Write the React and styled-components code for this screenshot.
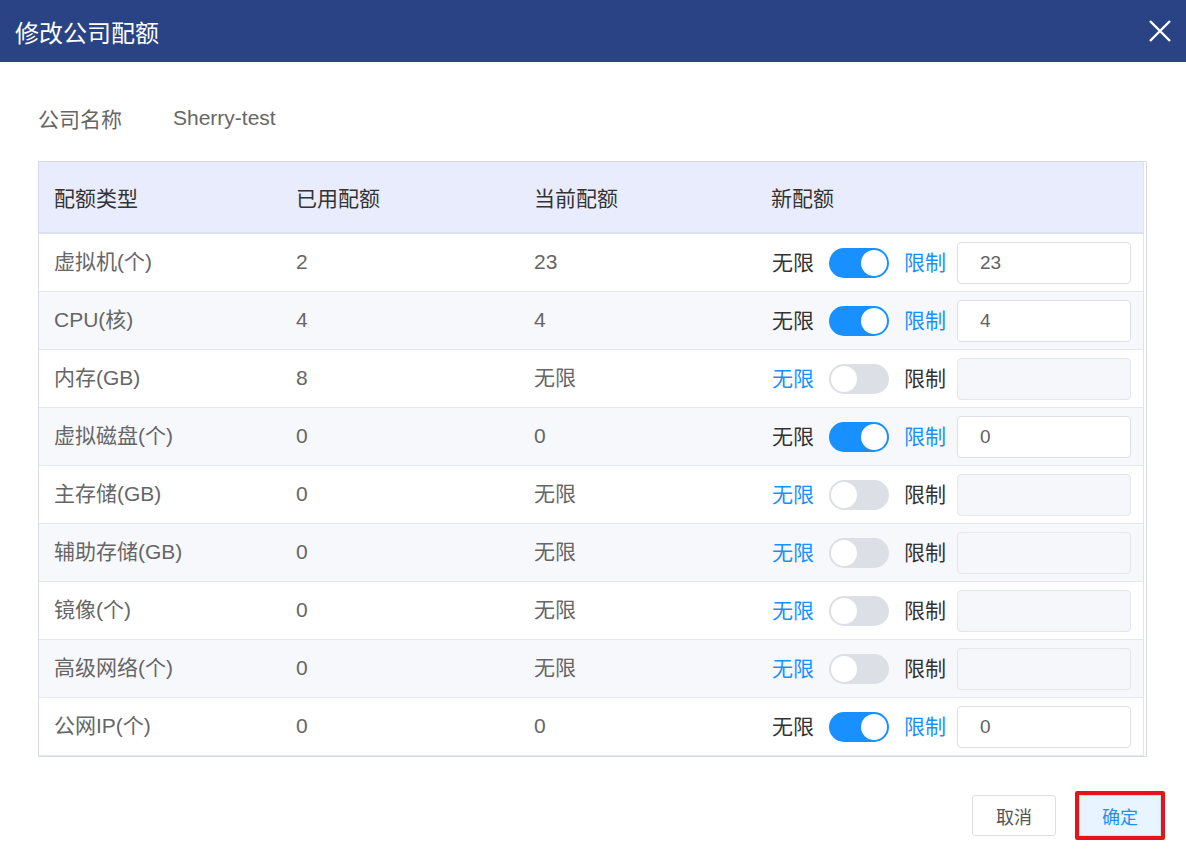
import styled, { createGlobalStyle } from 'styled-components';

const GlobalStyle = createGlobalStyle`
    body {
        margin: 0;
        background: #fff;
        font-family: "Liberation Sans", "Noto Sans CJK SC", sans-serif;
    }
`;

const rows = [
    { name: '虚拟机(个)', used: '2', current: '23', limited: true, value: '23' },
    { name: 'CPU(核)', used: '4', current: '4', limited: true, value: '4' },
    { name: '内存(GB)', used: '8', current: '无限', limited: false, value: '' },
    { name: '虚拟磁盘(个)', used: '0', current: '0', limited: true, value: '0' },
    { name: '主存储(GB)', used: '0', current: '无限', limited: false, value: '' },
    { name: '辅助存储(GB)', used: '0', current: '无限', limited: false, value: '' },
    { name: '镜像(个)', used: '0', current: '无限', limited: false, value: '' },
    { name: '高级网络(个)', used: '0', current: '无限', limited: false, value: '' },
    { name: '公网IP(个)', used: '0', current: '0', limited: true, value: '0' },
];

const App = () => {
    return (
        <Dialog>
            <GlobalStyle />
            <Header>
                <Title>修改公司配额</Title>
                <Close aria-label="close">
                    <svg width="24" height="24" viewBox="0 0 24 24">
                        <path d="M2 2 L22 22 M22 2 L2 22" stroke="#fff" strokeWidth="2.4" />
                    </svg>
                </Close>
            </Header>
            <Body>
                <CompanyRow>
                    <CompanyLabel>公司名称</CompanyLabel>
                    <CompanyName>Sherry-test</CompanyName>
                </CompanyRow>
                <TableWrap>
                    <Table>
                        <HeadRow>
                            <HeadCell>配额类型</HeadCell>
                            <HeadCell>已用配额</HeadCell>
                            <HeadCell>当前配额</HeadCell>
                            <HeadCell>新配额</HeadCell>
                        </HeadRow>
                        {rows.map((row, i) => (
                            <Row key={row.name} $stripe={i % 2 === 1}>
                                <Cell>{row.name}</Cell>
                                <Cell>{row.used}</Cell>
                                <Cell>{row.current}</Cell>
                                <QuotaCell>
                                    <Option $active={!row.limited}>无限</Option>
                                    <Switch $on={row.limited}><Knob /></Switch>
                                    <Option $active={row.limited}>限制</Option>
                                    <Input
                                        type="text"
                                        defaultValue={row.value}
                                        disabled={!row.limited}
                                    />
                                </QuotaCell>
                            </Row>
                        ))}
                    </Table>
                </TableWrap>
                <Footer>
                    <CancelButton>取消</CancelButton>
                    <Highlight>
                        <ConfirmButton>确定</ConfirmButton>
                    </Highlight>
                </Footer>
            </Body>
        </Dialog>
    );
};

export default App;

const Dialog = styled.div`
    width: 1186px;
    height: 860px;
    background: #fff;
    overflow: hidden;
`;

const Header = styled.div`
    height: 62px;
    background-color: #2a4385;
    display: flex;
    align-items: center;
    justify-content: space-between;
    padding: 0 14px 0 15px;
`;

const Title = styled.div`
    color: #fff;
    font-size: 24px;
    font-family: "Noto Sans CJK SC", sans-serif;
`;

const Close = styled.div`
    display: flex;
    width: 24px;
    height: 24px;
`;

const Body = styled.div`
    padding: 40px 39px 0 38px;
`;

const CompanyRow = styled.div`
    display: flex;
    align-items: center;
    height: 32px;
    font-size: 21px;
    color: #666;
`;

const CompanyLabel = styled.span`
    width: 135px;
`;

const CompanyName = styled.span``;

const TableWrap = styled.div`
    margin-top: 27px;
    border: 1px solid #d8dbe4;
    padding-right: 2px;
`;

const Table = styled.div`
    border-right: 1px solid #e1e4ec;
`;

const grid = `
    display: grid;
    grid-template-columns: 242px 238px 237px 1fr;
    align-items: center;
`;

const HeadRow = styled.div`
    ${grid}
    height: 70px;
    background-color: #e9ecfc;
    border-bottom: 2px solid #dde1ee;
`;

const HeadCell = styled.div`
    padding-left: 15px;
    font-size: 21px;
    color: #333;
`;

const Row = styled.div`
    ${grid}
    height: 57px;
    background-color: ${p => (p.$stripe ? '#f7f8fc' : '#fff')};
    border-bottom: 1px solid #e4e7ed;
`;

const Cell = styled.div`
    padding-left: 15px;
    font-size: 21px;
    color: #666;
    line-height: 1;
    margin-top: -2px;
`;

const QuotaCell = styled.div`
    display: flex;
    align-items: center;
    padding-left: 16px;
`;

const Option = styled.span`
    font-size: 21px;
    line-height: 1;
    margin-top: -1px;
    color: ${p => (p.$active ? '#1890ff' : '#333')};
`;

const Switch = styled.div`
    width: 60px;
    height: 30px;
    border-radius: 15px;
    margin: 0 15px;
    background-color: ${p => (p.$on ? '#1890ff' : '#dcdfe6')};
    display: flex;
    align-items: center;
    justify-content: ${p => (p.$on ? 'flex-end' : 'flex-start')};
    padding: 0 2px;
    box-sizing: border-box;
`;

const Knob = styled.div`
    width: 26px;
    height: 26px;
    border-radius: 50%;
    background: #fff;
`;

const Input = styled.input`
    width: 174px;
    height: 42px;
    box-sizing: border-box;
    margin-left: 11px;
    padding: 0 22px;
    border: 1px solid #dcdfe6;
    border-radius: 4px;
    font-size: 19px;
    font-family: "Liberation Sans", sans-serif;
    color: #606266;
    background-color: #fff;
    outline: none;

    &:disabled {
        background-color: #f5f7fa;
        border-color: #e4e7ed;
    }
`;

const Footer = styled.div`
    display: flex;
    justify-content: flex-end;
    align-items: center;
    margin-top: 34px;
    margin-right: -18px;
    gap: 19px;
`;

const CancelButton = styled.button`
    width: 84px;
    height: 41px;
    border: 1px solid #dcdfe6;
    border-radius: 3px;
    background: #fff;
    color: #555;
    font-size: 18px;
    font-family: "Noto Sans CJK SC", sans-serif;
    cursor: pointer;
`;

const Highlight = styled.div`
    border: 4px solid #e8121e;
    border-radius: 2px;
    display: flex;
`;

const ConfirmButton = styled.button`
    width: 82px;
    height: 41px;
    border: 1px solid #c9e2fb;
    background: #e8f4ff;
    color: #1890ff;
    font-size: 18px;
    font-family: "Noto Sans CJK SC", sans-serif;
    cursor: pointer;
`;
